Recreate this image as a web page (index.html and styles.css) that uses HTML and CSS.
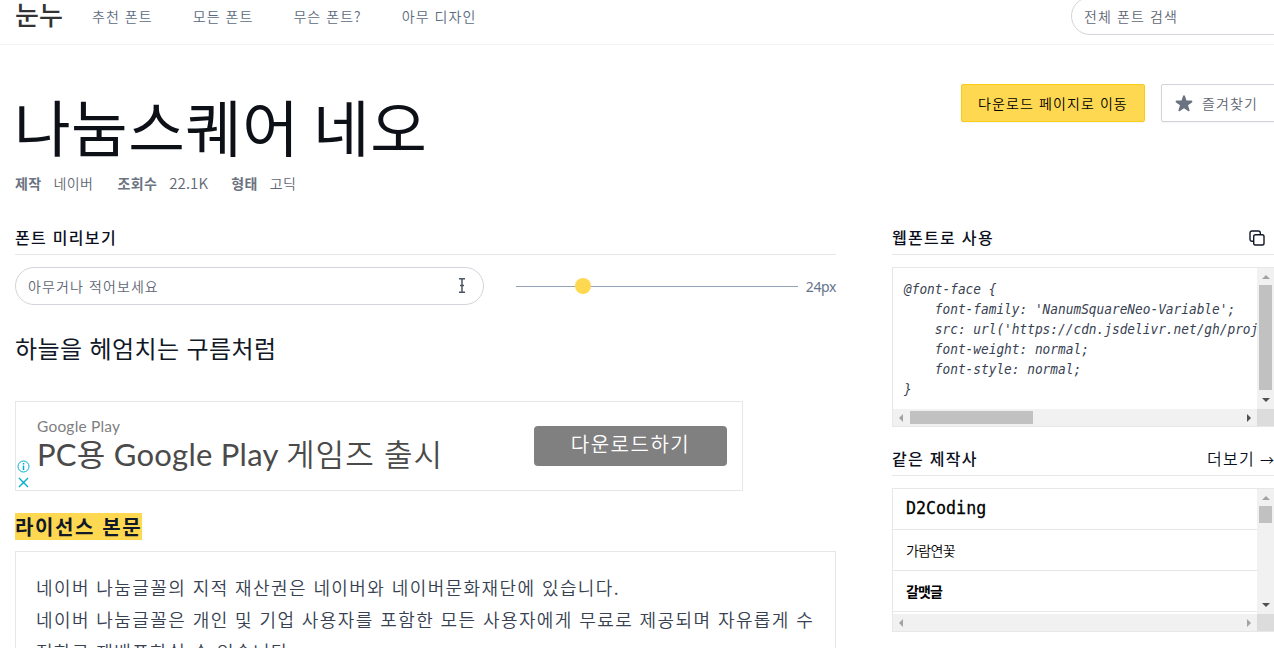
FILE: index.html
```html
<!DOCTYPE html>
<html lang="ko">
<head>
    <meta charset="UTF-8">
    <meta name="viewport" content="width=device-width, initial-scale=1.0">
    <title>눈누</title>
    <link rel="stylesheet" href="styles.css">
</head>
<body>

    <header>
        <a class="logo" href="#">눈누</a>
        <nav>
            <a href="#">추천 폰트</a>
            <a href="#">모든 폰트</a>
            <a href="#">무슨 폰트?</a>
            <a href="#">아무 디자인</a>
        </nav>
        <div class="search">전체 폰트 검색</div>
    </header>

    <div class="top">
        <div class="heading">
            <h1>나눔스퀘어 네오</h1>
            <dl class="meta">
                <dt>제작</dt><dd>네이버</dd>
                <dt>조회수</dt><dd class="views">22.1K</dd>
                <dt>형태</dt><dd>고딕</dd>
            </dl>
        </div>
        <div class="buttons">
            <a class="btn btn-yellow" href="#">다운로드 페이지로 이동</a>
            <a class="btn" href="#">
                <svg width="20" height="20" viewBox="0 0 20 20" fill="#6b7280"><path d="M9.05 2.93c.3-.92 1.6-.92 1.9 0l1.52 4.67h4.91c.97 0 1.37 1.24.59 1.81L14 12.3l1.52 4.67c.3.92-.76 1.69-1.54 1.12L10 15.2l-3.98 2.89c-.78.57-1.84-.2-1.54-1.12L6 12.3 2.03 9.41c-.78-.57-.38-1.81.59-1.81h4.91z"/></svg>
                즐겨찾기
            </a>
        </div>
    </div>

    <main>
        <div class="left">
            <h2>폰트 미리보기</h2>
            <div class="controls">
                <div class="preview-input">
                    <span>아무거나 적어보세요</span>
                    <svg class="ibeam" width="8" height="15" viewBox="0 0 8 15" fill="none" stroke="#4b5563" stroke-width="1.5"><path d="M1 .8h2.2l.8.8.8-.8H7M1 14.2h2.2l.8-.8.8.8H7M4 1.6v11.8M2 7.5h4"/></svg>
                </div>
                <div class="slider"><div class="knob"></div></div>
                <span class="size">24px</span>
            </div>
            <p class="preview">하늘을 헤엄치는 구름처럼</p>

            <div class="ad">
                <div class="ad-choices">
                    <svg width="13" height="13" viewBox="0 0 13 13" fill="none" stroke="#00aecd"><circle cx="6.5" cy="6.5" r="5.5"/><path d="M6.5 3v1.5M6.5 5.5V10" stroke-width="1.5"/></svg>
                    <svg width="13" height="13" viewBox="0 0 13 13" fill="none" stroke="#00aecd" stroke-width="1.4"><path d="M2 2l9 9M11 2l-9 9"/></svg>
                </div>
                <div class="ad-text">
                    <small>Google Play</small>
                    <strong>PC용 Google Play <span>게임즈 출시</span></strong>
                </div>
                <a class="ad-btn" href="#">다운로드하기</a>
            </div>

            <h3><mark>라이선스 본문</mark></h3>
            <div class="license">
                네이버 나눔글꼴의 지적 재산권은 네이버와 네이버문화재단에 있습니다.<br>
                네이버 나눔글꼴은 개인 및 기업 사용자를 포함한 모든 사용자에게 무료로 제공되며 자유롭게 수<br>
                정하고 재배포하실 수 있습니다.
            </div>
        </div>

        <div class="right">
            <h2>웹폰트로 사용
                <svg class="copy" width="16" height="16" viewBox="0 0 16 16" fill="none" stroke="#111827" stroke-width="1.4"><rect x="4.7" y="4.7" width="10.3" height="10.3" rx="1.8"/><path d="M4.7 11.3H3A2 2 0 0 1 1 9.300V3a2 2 0 0 1 2-2h6.300a2 2 0 0 1 2 2v1.700"/></svg>
            </h2>
            <div class="scrollbox codebox">
                <pre><code>@font-face {
    font-family: 'NanumSquareNeo-Variable';
    src: url('https://cdn.jsdelivr.net/gh/proj
    font-weight: normal;
    font-style: normal;
}</code></pre>
                <div class="bar-v"><i class="up"></i><b></b><i class="down"></i></div>
                <div class="bar-h"><i class="prev"></i><b></b><i class="next"></i></div>
                <div class="corner"></div>
            </div>

            <h2 class="maker">같은 제작사 <a href="#">더보기 <span>→</span></a></h2>
            <div class="scrollbox fontbox">
                <ul>
                    <li class="d2"><span>D2Coding</span></li>
                    <li class="garam">가람연꽃</li>
                    <li class="galmaet">갈맷글</li>
                </ul>
                <div class="bar-v"><i class="up"></i><b></b><i class="down"></i></div>
                <div class="bar-h"><i class="prev"></i><i class="next off"></i></div>
                <div class="corner"></div>
            </div>
        </div>
    </main>

</body>
</html>
```

FILE: styles.css
```css
* {
    box-sizing: border-box;
}

html, body {
    height: 100%;
    overflow: hidden;
}

body {
    margin: 0;
    font-family: "Noto Sans CJK KR", sans-serif;
    font-size: 14px;
    font-weight: 350;
    color: #111827;
    background-color: #fff;
}

a {
    color: inherit;
    text-decoration: none;
}

svg {
    display: block;
    flex: none;
}

h1, h2, h3, p, dl, dd, ul, pre {
    margin: 0;
    padding: 0;
}

header {
    display: flex;
    align-items: center;
    height: 45px;
    padding: 0 0 12px 15px;
    border-bottom: 1px solid #f3f4f6;
}

.logo {
    width: 77px;
    margin-top: -4px;
    font-size: 26px;
    font-weight: 500;
    line-height: 30px;
    color: #333;
}

nav {
    display: flex;
    gap: 40px;
    letter-spacing: 1.05px;
    color: #5b6b80;
}

.search {
    flex: none;
    width: 240px;
    height: 38px;
    margin-left: auto;
    margin-right: -37px;
    padding-left: 12px;
    line-height: 36px;
    letter-spacing: 1.1px;
    color: #5f6774;
    border: 1px solid #d1d5db;
    border-radius: 19px;
}

.top {
    display: flex;
    height: 181px;
    padding: 39px 0 0 15px;
}

.heading {
    padding-top: 12px;
}

h1 {
    font-size: 61.5px;
    font-weight: 400;
    line-height: 60px;
    letter-spacing: 0.5px;
    word-spacing: -4px;
    margin-left: -1px;
    color: #0d1117;
}

.meta {
    display: flex;
    margin-top: 17px;
    line-height: 20px;
    letter-spacing: 0.4px;
    color: #5f6774;
}

.meta dt {
    margin-right: 12px;
    font-weight: 700;
    color: #6b7280;
}

.meta dd {
    margin-right: 24px;
}

.meta .views {
    width: 38px;
    font-size: 15px;
    letter-spacing: 0.1px;
}

.buttons {
    display: flex;
    gap: 16px;
    margin-left: auto;
    margin-right: -14px;
}

.btn {
    display: flex;
    align-items: center;
    gap: 8px;
    flex: none;
    width: 127px;
    height: 38px;
    padding: 0 0 1px 12px;
    letter-spacing: 1.1px;
    color: #5f6774;
    border: 1px solid #d1d5db;
    border-radius: 2px;
    box-shadow: 0 1px 2px rgba(0, 0, 0, 0.05);
}

.btn-yellow {
    width: 184px;
    padding-left: 16px;
    color: #000;
    background-color: #ffd852;
    border-color: #facc15;
}

main {
    display: grid;
    grid-template-columns: 821px 383px;
    gap: 56px;
    padding-left: 15px;
}

h2 {
    display: flex;
    align-items: center;
    height: 29px;
    padding-bottom: 7px;
    margin-bottom: 12px;
    font-size: 16px;
    font-weight: 500;
    letter-spacing: 1.3px;
    color: #0b1020;
    border-bottom: 1px solid #e5e7eb;
}

.controls {
    display: flex;
    align-items: center;
}

.preview-input {
    display: flex;
    align-items: center;
    justify-content: space-between;
    width: 469px;
    height: 38px;
    padding: 0 17px 1px 12px;
    letter-spacing: 1.1px;
    color: #5f6774;
    border: 1px solid #d1d5db;
    border-radius: 19px;
}

.slider {
    flex: none;
    width: 282px;
    height: 1px;
    margin: 0 8px 0 32px;
    background-color: #94a3b8;
}

.knob {
    width: 16px;
    height: 16px;
    margin: -8px 0 0 59px;
    border-radius: 50%;
    background-color: #ffd852;
}

.size {
    font-family: "Noto Sans", sans-serif;
    font-size: 14px;
    font-weight: 400;
    letter-spacing: -0.4px;
    color: #64748b;
}

.preview {
    margin-top: 23px;
    font-size: 24px;
    font-weight: 400;
    line-height: 40px;
    letter-spacing: 0.4px;
}

.ad {
    display: flex;
    width: 728px;
    height: 90px;
    margin-top: 33px;
    border: 1px solid #e5e7eb;
}

.ad-choices {
    display: flex;
    flex-direction: column;
    justify-content: flex-end;
    gap: 3px;
    width: 21px;
    padding: 0 0 1px 1px;
}

.ad-text {
    font-family: Lato, "Noto Sans CJK KR", sans-serif;
    white-space: nowrap;
}

.ad-text small {
    display: block;
    margin-top: 14px;
    font-size: 15.5px;
    font-weight: 400;
    line-height: 20px;
    letter-spacing: 0.2px;
    color: #808080;
}

.ad-text strong {
    display: block;
    font-size: 31px;
    font-weight: 400;
    line-height: 36px;
    letter-spacing: 0.25px;
    color: #4a4a4a;
}

.ad-text strong span {
    font-weight: 350;
    letter-spacing: 1px;
}

.ad-btn {
    width: 193px;
    height: 40px;
    margin: 24px 15px 0 auto;
    font-size: 20px;
    line-height: 35px;
    letter-spacing: 1.5px;
    text-align: center;
    color: #fff;
    background-color: #808080;
    border-radius: 4px;
}

h3 {
    height: 27px;
    margin: 22px 0 11px;
    font-size: 20px;
    font-weight: 700;
    line-height: 27px;
    letter-spacing: 1.6px;
}

mark {
    display: inline-block;
    width: 127px;
    height: 27px;
    color: #111827;
    background-color: #ffd852;
    white-space: nowrap;
}

.license {
    height: 200px;
    padding: 19px 20px;
    font-size: 18px;
    line-height: 32px;
    letter-spacing: 1.41px;
    white-space: nowrap;
    color: #374151;
    border: 1px solid #e5e7eb;
}

.copy {
    margin: 2px 10px 0 auto;
}

.scrollbox {
    display: grid;
    grid-template-columns: 364px 17px;
    border: 1px solid #e5e7eb;
}

.codebox {
    grid-template-rows: 141px 17px;
}

.fontbox {
    grid-template-rows: 125px 17px;
}

pre {
    padding: 11px 0 0 11px;
    line-height: 20px;
    overflow: hidden;
}

/* narrower letters, 7.7px per column */
code {
    display: inline-block;
    font-family: "DejaVu Sans Mono", monospace;
    font-size: 13.6px;
    font-style: italic;
    font-weight: 400;
    line-height: 20px;
    color: #374151;
    transform: scaleX(0.941);
    transform-origin: left;
}

/* scrollbars */
.bar-v, .bar-h {
    display: flex;
    align-items: center;
    justify-content: space-between;
    background-color: #f1f1f1;
}

.bar-v {
    flex-direction: column;
    padding: 7px 0;
}

.bar-h {
    padding: 0 6px;
}

.bar-v b {
    width: 13px;
    height: 105px;
    margin: 6px 0 auto;
    background-color: #c1c1c1;
}

.fontbox .bar-v b {
    height: 17px;
}

.bar-h b {
    width: 123px;
    height: 13px;
    margin: 0 auto 0 7px;
    background-color: #c1c1c1;
}

.corner {
    background-color: #dcdcdc;
}

.up, .down, .prev, .next {
    border: 4px solid transparent;
}

.up {
    border-top: 0;
    border-bottom-color: #a3a3a3;
}

.down {
    border-bottom: 0;
    border-top-color: #505050;
}

.prev {
    border-left: 0;
    border-right-color: #a3a3a3;
}

.next {
    border-right: 0;
    border-left-color: #505050;
}

.next.off {
    border-left-color: #a3a3a3;
}

.maker {
    margin-top: 20px;
}

.maker a {
    display: flex;
    align-items: center;
    margin-left: auto;
    font-weight: 350;
}

.maker a span {
    width: 15px;
    margin: 2px 0 0 5px;
    font-size: 14px;
    letter-spacing: 0;
}

ul {
    list-style: none;
    overflow: hidden;
}

li {
    height: 41px;
    padding-left: 13px;
    line-height: 40px;
    color: #000;
    border-bottom: 1px solid #e5e7eb;
}

.d2 {
    font-family: "DejaVu Sans Mono", monospace;
    font-size: 18.5px;
    line-height: 38px;
}

.d2 span {
    display: inline-block;
    transform: scaleX(0.9);
    transform-origin: left;
    -webkit-text-stroke: 0.3px #000;
}

.garam {
    letter-spacing: -0.6px;
}

.galmaet {
    font-weight: 700;
    letter-spacing: -0.9px;
}
```
